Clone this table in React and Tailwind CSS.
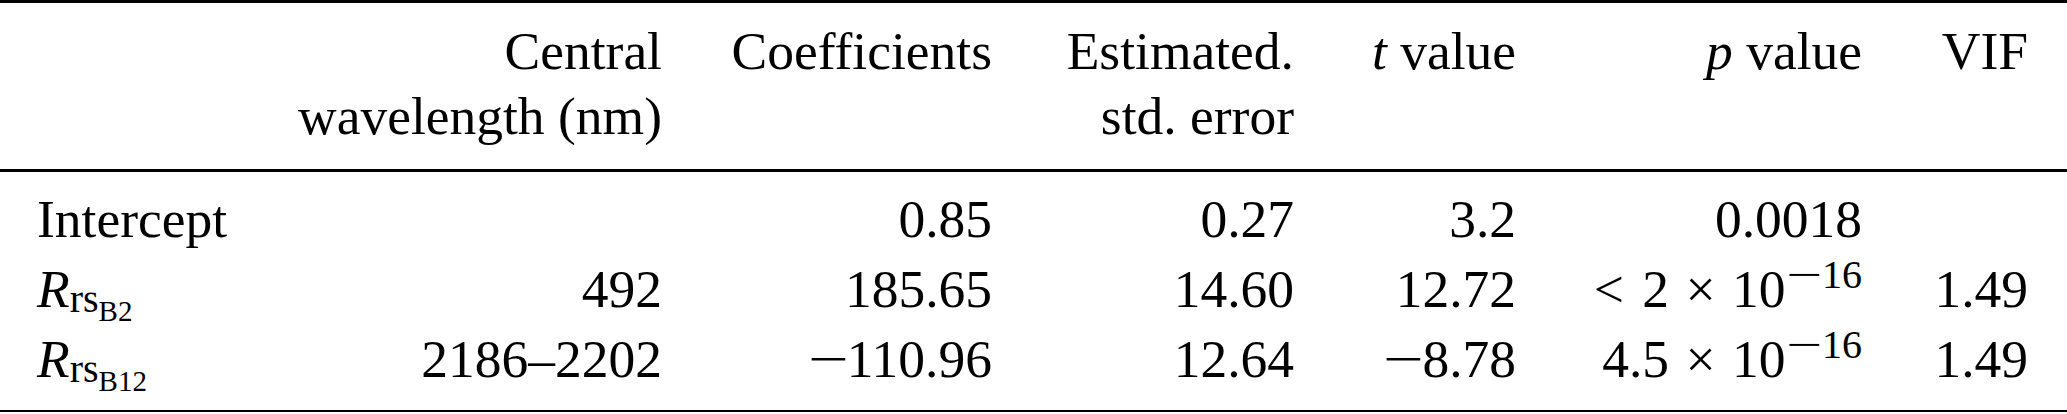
import React from 'react';

const cols = 'grid grid-cols-[264px_435px_330px_302px_222px_346px_168px]';

// TeX-style minus: Times' own minus is too short, so stretch it a little
const Minus = () => (
  <span className="inline-block scale-x-[1.35] mx-[4px]">−</span>
);

const SupMinus = () => (
  <span className="inline-block scale-x-[1.6] mx-[6px]">−</span>
);

const Rrs = ({ band }) => (
  <span>
    <i>R</i>
    <span className="relative top-[5px] text-[40px] leading-none">
      rs
      <span className="relative top-[9px] text-[29px] leading-none">{band}</span>
    </span>
  </span>
);

const Pow = ({ lead }) => (
  <span>
    {lead}
    <span className="mx-[3px]">×</span> 10
    <span className="relative -top-[19px] ml-[2px] text-[40px] leading-none">
      <SupMinus />16
    </span>
  </span>
);

const rows = [
  { label: 'Intercept', wl: '', coef: '0.85', se: '0.27', t: '3.2', p: '0.0018', vif: '' },
  {
    label: <Rrs band="B2" />,
    wl: '492',
    coef: '185.65',
    se: '14.60',
    t: '12.72',
    p: <Pow lead={<><span className="mr-[5px]">&lt;</span> 2 </>} />,
    vif: '1.49',
  },
  {
    label: <Rrs band="B12" />,
    wl: '2186–2202',
    coef: <><Minus />110.96</>,
    se: '12.64',
    t: <><Minus />8.78</>,
    p: <Pow lead="4.5 " />,
    vif: '1.49',
  },
];

const Cell = ({ children, first, last }) => (
  <div
    className={
      first
        ? 'pl-[37px] text-left whitespace-nowrap'
        : last
        ? 'pr-[39px] text-right whitespace-nowrap'
        : 'pr-[37px] text-right whitespace-nowrap'
    }
  >
    {children}
  </div>
);

export default function App() {
  return (
    <div className="w-[2067px] h-[414px] bg-white text-black font-['Liberation_Serif','Times_New_Roman',serif] text-[53.5px]">
      <div className="h-[3px] bg-black" />

      {/* Header */}
      <div className={`${cols} pt-[16px] pb-[20px] leading-[65px]`}>
        <Cell first />
        <Cell>
          Central
          <br />
          wavelength (nm)
        </Cell>
        <Cell>Coefficients</Cell>
        <Cell>
          Estimated.
          <br />
          std. error
        </Cell>
        <Cell>
          <i>t</i> value
        </Cell>
        <Cell>
          <i>p</i> value
        </Cell>
        <Cell last>VIF</Cell>
      </div>

      <div className="h-[3px] bg-black" />

      {/* Body */}
      <div className="pt-[12px] pb-[16px] leading-[70px]">
        {rows.map((r, i) => (
          <div key={i} className={cols}>
            <Cell first>{r.label}</Cell>
            <Cell>{r.wl}</Cell>
            <Cell>{r.coef}</Cell>
            <Cell>{r.se}</Cell>
            <Cell>{r.t}</Cell>
            <Cell>{r.p}</Cell>
            <Cell last>{r.vif}</Cell>
          </div>
        ))}
      </div>

      <div className="h-[2px] bg-black" />
    </div>
  );
}
